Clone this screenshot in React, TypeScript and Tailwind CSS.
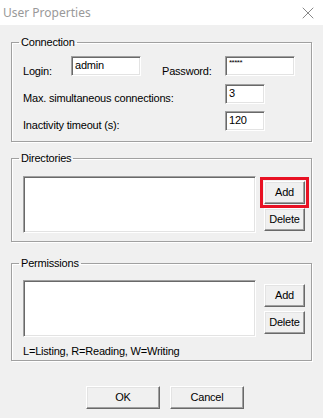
import { X } from "lucide-react";

const font = { fontFamily: '"Liberation Sans", Arial, sans-serif' };

function Edit({ value, w, small }: { value: string; w: string; small?: boolean }) {
  return (
    <div
      className={`${w} h-[20px] bg-white border border-t-[#a0a0a0] border-l-[#a0a0a0] border-r-white border-b-white shadow-[inset_1px_1px_0_#696969,inset_-1px_-1px_0_#e3e3e3] px-[3px] pt-[1px] ${small ? "text-[8px] leading-[10px] tracking-[-0.5px]" : "text-[11px] leading-[14px]"} text-black`}
    >
      {value}
    </div>
  );
}

function Btn({ label, w, red }: { label: string; w: string; red?: boolean }) {
  return (
    <button
      className={`${w} h-[23px] bg-[#f0f0f0] border border-t-white border-l-white border-r-[#696969] border-b-[#696969] shadow-[inset_-1px_-1px_0_#a0a0a0,inset_1px_1px_0_#e3e3e3] text-[11px] leading-[13px] tracking-[-0.2px] text-black flex items-center justify-center ${red ? "outline-[3px] outline-solid outline-[#e81123] outline-offset-[1px]" : ""}`}
    >
      {label}
    </button>
  );
}

function ListBox() {
  return (
    <div className="w-[233px] h-[57px] bg-white border border-t-[#a0a0a0] border-l-[#a0a0a0] border-r-white border-b-white shadow-[inset_1px_1px_0_#696969,inset_-1px_-1px_0_#e3e3e3]" />
  );
}

function Group({ title, h, children }: { title: string; h: string; children: React.ReactNode }) {
  return (
    <fieldset className={`${h} border border-[#a0a0a0] shadow-[inset_1px_1px_0_#fff,1px_1px_0_#fff]`}>
      <legend className="ml-[7px] px-[2px] text-[11px] leading-[13px] tracking-[-0.2px] text-black">{title}</legend>
      <div className="pl-[11px]">{children}</div>
    </fieldset>
  );
}

export default function App() {
  return (
    <div className="w-[323px] h-[418px] bg-[#f0f0f0] flex flex-col" style={font}>
      <div className="h-[25px] bg-white flex items-center justify-between pl-[3px] pr-[5px]">
        <span className="text-[12px] text-[#999999]" style={{ fontFamily: '"Noto Sans", "Open Sans", sans-serif' }}>
          User Properties
        </span>
        <X className="w-[20px] h-[20px] text-[#707070]" strokeWidth={1} />
      </div>

      <div className="px-[11px] flex flex-col">
        <div className="mt-[11px]">
          <Group title="Connection" h="h-[106px]">
            <div className="mt-[7px] flex flex-col gap-[6px] text-[11px] leading-[13px] tracking-[-0.2px]">
              <div className="flex items-start">
                <span className="w-[48px] pt-[9px]">Login:</span>
                <Edit value="admin" w="w-[70px]" />
                <span className="ml-[21px] w-[63px] pt-[9px]">Password:</span>
                <Edit value="*****" w="w-[70px]" small />
              </div>
              <div className="flex items-start">
                <span className="w-[202px] pt-[8px]">Max. simultaneous connections:</span>
                <Edit value="3" w="w-[40px]" />
              </div>
              <div className="flex items-start">
                <span className="w-[202px] pt-[8px]">Inactivity timeout (s):</span>
                <Edit value="120" w="w-[40px]" />
              </div>
            </div>
          </Group>
        </div>

        <div className="mt-[10px]">
          <Group title="Directories" h="h-[90px]">
            <div className="mt-[11px] flex items-start">
              <ListBox />
              <div className="ml-[8px] mt-[5px] flex flex-col gap-[4px]">
                <Btn label="Add" w="w-[41px]" red />
                <Btn label="Delete" w="w-[41px]" />
              </div>
            </div>
          </Group>
        </div>

        <div className="mt-[15px]">
          <Group title="Permissions" h="h-[104px]">
            <div className="mt-[10px] flex items-start">
              <ListBox />
              <div className="ml-[8px] mt-[4px] flex flex-col gap-[4px]">
                <Btn label="Add" w="w-[41px]" />
                <Btn label="Delete" w="w-[41px]" />
              </div>
            </div>
            <div className="mt-[8px] text-[11px] leading-[13px] tracking-[-0.2px]">L=Listing, R=Reading, W=Writing</div>
          </Group>
        </div>

        <div className="mt-[25px] flex justify-center gap-[10px] pl-[7px]">
          <Btn label="OK" w="w-[74px]" />
          <Btn label="Cancel" w="w-[74px]" />
        </div>
      </div>
    </div>
  );
}
